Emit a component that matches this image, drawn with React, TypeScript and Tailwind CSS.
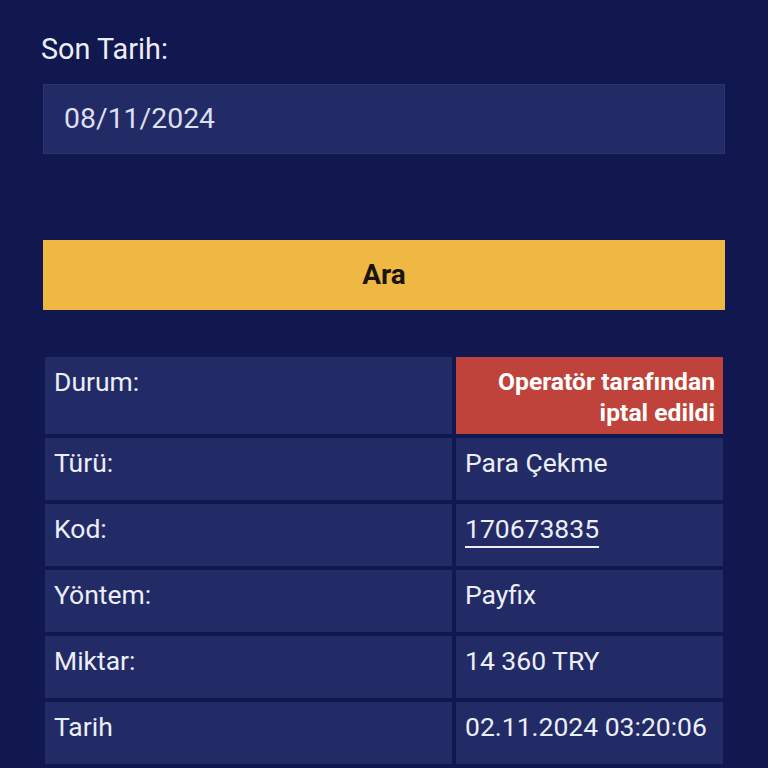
import React from 'react'

const rows: { label: string; value: React.ReactNode; status?: boolean }[] = [
  { label: 'Durum:', value: 'Operatör tarafından iptal edildi', status: true },
  { label: 'Türü:', value: 'Para Çekme' },
  {
    label: 'Kod:',
    value: (
      <span className="underline decoration-2 underline-offset-[8px]">170673835</span>
    ),
  },
  { label: 'Yöntem:', value: 'Payfix' },
  { label: 'Miktar:', value: '14 360 TRY' },
  { label: 'Tarih', value: '02.11.2024 03:20:06' },
]

export default function App() {
  return (
    <div
      className="min-h-screen bg-[#11174f] text-[#eceef6] overflow-hidden"
      style={{ fontFamily: 'Roboto, "Liberation Sans", sans-serif' }}
    >
      <div className="pl-[43px] pr-[43px] pt-[33px]">
        {/* Son tarih */}
        <label className="block -ml-[2px] text-[28.8px] leading-[33px]">Son Tarih:</label>
        <div className="mt-[18px] h-[70px] flex items-center pl-[20px] bg-[#232b67] border border-[#2b3372] text-[28.4px] text-[#dcdff0]">
          08/11/2024
        </div>

        {/* Ara */}
        <button className="mt-[86px] w-full h-[70px] bg-[#efb842] text-[#1a1410] font-bold text-[28px]">
          Ara
        </button>

        {/* Sonuç */}
        <div className="mt-[47px] px-[2px] grid grid-cols-[407px_267px] gap-[4px]">
          {rows.map((r) => (
            <React.Fragment key={r.label}>
              <div className="bg-[#232b67] min-h-[62px] pl-[9px] pt-[9px] pb-[6px] text-[26.5px] leading-[31px]">
                {r.label}
              </div>
              {r.status ? (
                <div className="bg-[#c0433b] min-h-[62px] pr-[8px] pl-[9px] pt-[9px] pb-[6px] text-right font-bold text-[24.7px] leading-[31px] text-white">
                  Operatör tarafından
                  <br />
                  iptal edildi
                </div>
              ) : (
                <div className="bg-[#232b67] min-h-[62px] pl-[9px] pt-[9px] pb-[6px] text-[26.5px] leading-[31px]">
                  {r.value}
                </div>
              )}
            </React.Fragment>
          ))}
        </div>
      </div>
    </div>
  )
}
